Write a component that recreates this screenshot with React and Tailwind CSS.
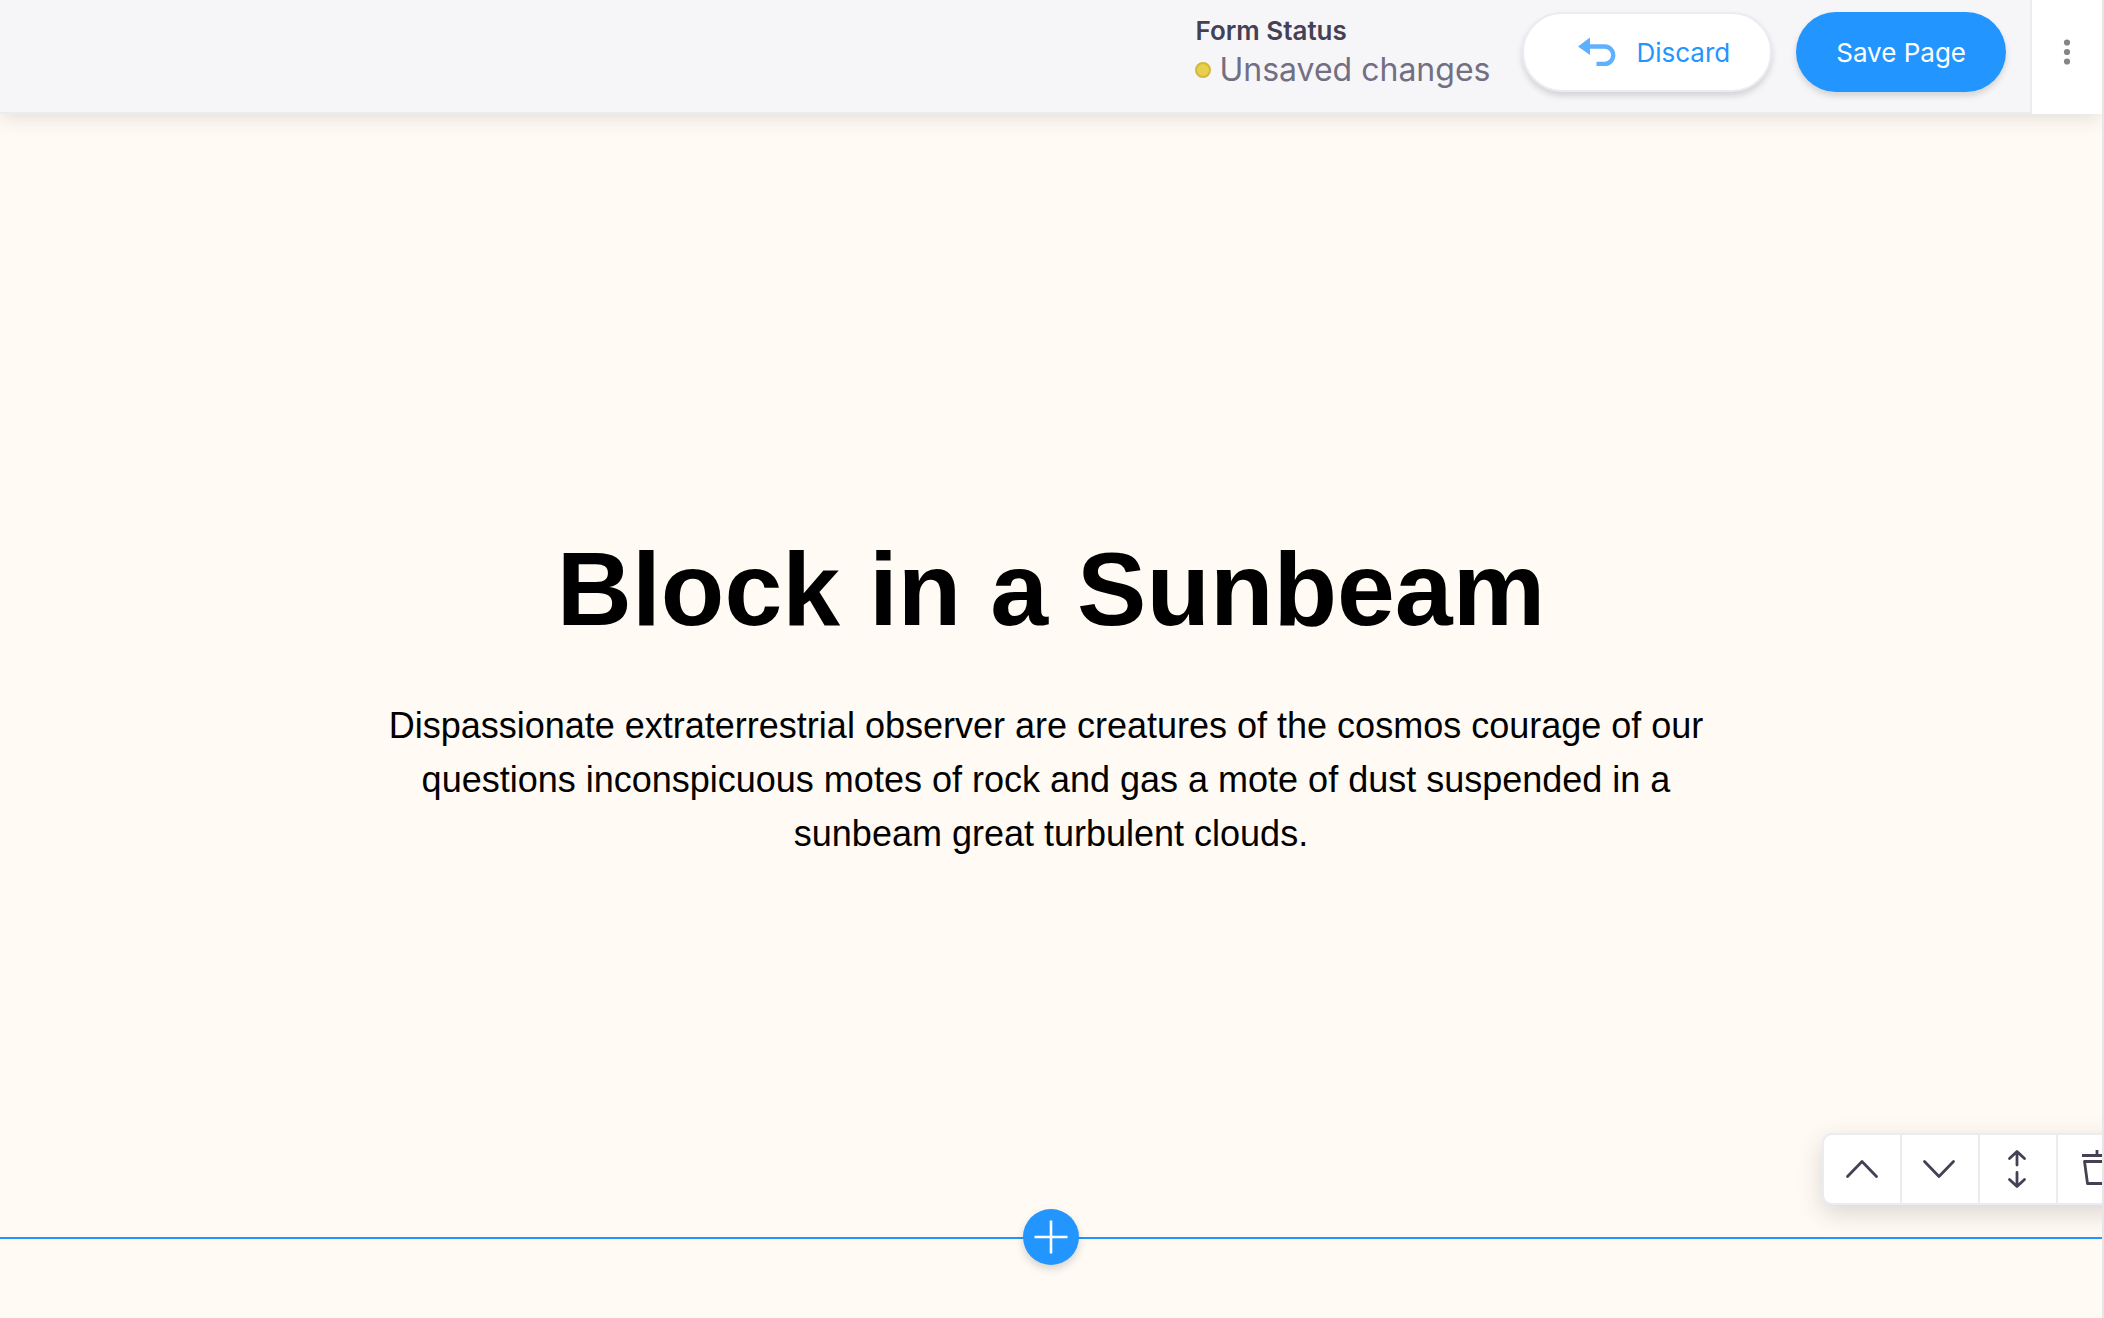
function UndoIcon() {
  return (
    <svg width="38" height="30" viewBox="0 0 38 30" fill="none" aria-hidden="true">
      <path d="M0 9.5 12 .5V18z" fill="#5fb0ff" />
      <path d="M11 9.500h15.500a8.700 8.700 0 0 1 0 17.400H18.500" stroke="#5fb0ff" strokeWidth="4.4" />
    </svg>
  );
}

function MoreIcon() {
  return (
    <svg width="8" height="28" viewBox="0 0 8 28" fill="#858585" aria-hidden="true">
      <circle cx="4" cy="4.5" r="3.1" />
      <circle cx="4" cy="14" r="3.1" />
      <circle cx="4" cy="23.5" r="3.1" />
    </svg>
  );
}

function ToolIcon({ d, cap = "round" }) {
  return (
    <svg
      width="40"
      height="40"
      viewBox="0 0 40 40"
      fill="none"
      stroke="#454054"
      strokeWidth="2.8"
      strokeLinecap={cap}
      strokeLinejoin="round"
      aria-hidden="true"
    >
      <path d={d} />
    </svg>
  );
}

const tools = [
  { label: "Move up", d: "M5.500 27.500 20 12.500 34.500 27.500" },
  { label: "Move down", d: "M4.500 12.500 19 27.500 33.500 12.500" },
  {
    label: "Adjust spacing",
    d: "M19 16V3M11.500 9.500 19 2.500 26.500 9.500M19 23.500v13.500M11.500 30.500 19 37.500l7.500-7",
  },
  { label: "Delete", cap: "butt", d: "M5 6.500h32M20 1v5M7.500 12.500h26L30.500 34.500h-20z" },
];

export default function App() {
  return (
    <div className="flex min-h-screen flex-col overflow-x-hidden border-r-2 border-[#e6e6e9] bg-[#fffaf3] font-['Inter',sans-serif]">
      <header className="relative z-10 flex justify-end bg-[#f6f6f9] shadow-[0_6px_18px_-2px_rgba(60,50,70,0.14)]">
        <div className="flex flex-1 items-start justify-end gap-6 border-b-2 border-[#ebebf2] pt-3 pr-6 pb-5">
          <div className="mr-2">
            <div className="text-[26px] leading-[38px] font-semibold text-[#454054]">Form Status</div>
            <div className="flex items-center gap-2 text-[32px] leading-[40px] text-[#736f83]">
              <span className="size-4 rounded-full border-2 border-[#d2b83a] bg-[#e8d04f]" />
              Unsaved changes
            </div>
          </div>
          <button
            type="button"
            className="flex h-20 items-center gap-5 rounded-full border-2 border-[#ebebf2] bg-white pr-10 pl-[54px] text-[26px] text-[#2395ff] shadow-[0_4px_6px_rgba(0,0,0,0.14)]"
          >
            <UndoIcon />
            Discard
          </button>
          <button
            type="button"
            className="h-20 rounded-full bg-[#2395ff] px-10 text-[26px] text-white shadow-[0_4px_6px_rgba(0,0,0,0.14)]"
          >
            Save Page
          </button>
        </div>
        <button
          type="button"
          aria-label="More options"
          className="flex w-[72px] justify-center border-l-2 border-[#ebebf2] bg-white pt-[38px]"
        >
          <MoreIcon />
        </button>
      </header>

      <main>
        <section className="relative overflow-hidden px-10 pt-[410px] pb-[376px] text-center font-['Liberation_Sans',sans-serif] text-black">
          <h1 className="text-[104px] leading-[130px] font-bold">Block in a Sunbeam</h1>
          <p className="mt-[45px] text-[36px] leading-[54px]">
            Dispassionate extraterrestrial observer are creatures of the cosmos courage of our&nbsp;
            <br />
            questions inconspicuous motes of rock and gas a mote of dust suspended in a&nbsp;
            <br />
            sunbeam great turbulent clouds.
          </p>
          <div className="absolute -right-9 bottom-8 flex divide-x-2 divide-[#ebebf2] rounded-[10px] border-2 border-[#ebebf2] bg-white shadow-[0_8px_24px_rgba(60,50,70,0.18)]">
            {tools.map((tool) => (
              <button
                key={tool.label}
                type="button"
                aria-label={tool.label}
                className="flex h-[68px] w-[78px] items-center justify-center"
              >
                <ToolIcon d={tool.d} cap={tool.cap} />
              </button>
            ))}
          </div>
        </section>
        <div className="relative border-t-2 border-[#2395ff] pb-[78px]">
          <button
            type="button"
            aria-label="Add block"
            className="absolute -top-[30px] left-1/2 flex size-14 -translate-x-1/2 items-center justify-center rounded-full bg-[#2395ff] shadow-[0_4px_8px_rgba(0,0,0,0.16)]"
          >
            <svg width="34" height="34" viewBox="0 0 34 34" stroke="#fff" strokeWidth="2.6" aria-hidden="true">
              <path d="M17 .5v33M.5 17h33" />
            </svg>
          </button>
        </div>
      </main>
    </div>
  );
}
